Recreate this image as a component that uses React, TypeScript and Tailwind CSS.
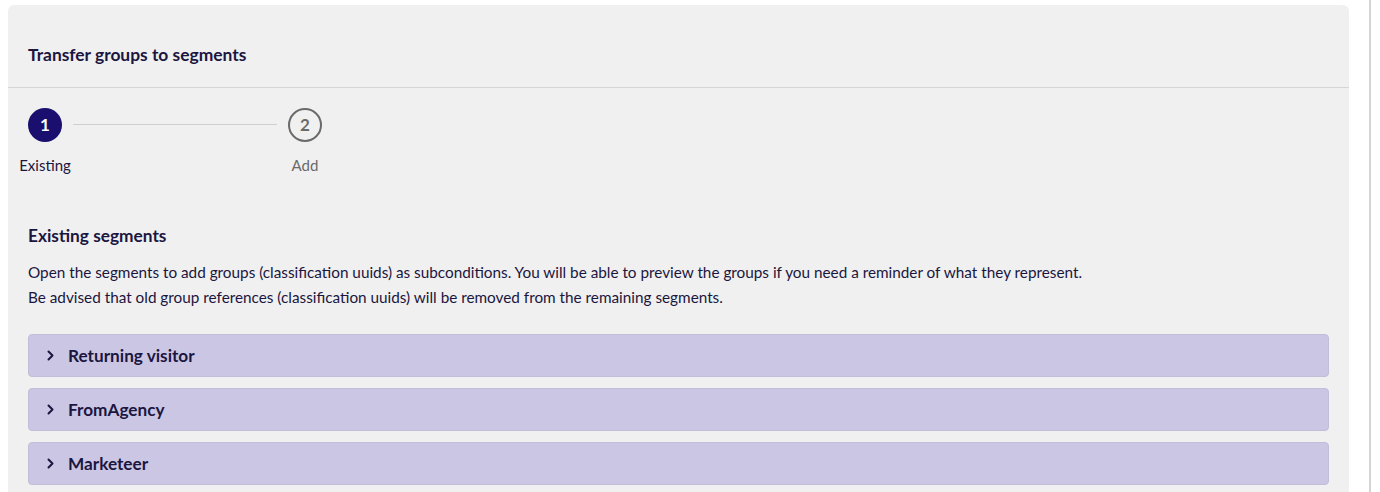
import React from 'react';

const segments = ['Returning visitor', 'FromAgency', 'Marketeer'];

function Chevron() {
  return (
    <svg width="8" height="11" viewBox="0 0 8 11" fill="none" className="shrink-0">
      <path d="M1.5 1.5l4 4-4 4" stroke="#1b1640" strokeWidth="2" strokeLinecap="round" strokeLinejoin="round" />
    </svg>
  );
}

function Step({ num, label, active }: { num: number; label: string; active?: boolean }) {
  return (
    <div className="flex w-[56px] flex-col items-center">
      {active ? (
        <div className="flex h-[34px] w-[34px] items-center justify-center rounded-full bg-[#1a0f6e] text-[17px] font-bold text-white">
          {num}
        </div>
      ) : (
        <div className="flex h-[34px] w-[34px] items-center justify-center rounded-full border-2 border-[#6a6a6a] text-[17px] font-bold text-[#6a6a6a]">
          {num}
        </div>
      )}
      <div className={`mt-[13px] whitespace-nowrap text-[15px] leading-[20px] ${active ? 'text-[#1b1640]' : 'text-[#6a6a6a]'}`}>
        {label}
      </div>
    </div>
  );
}

export default function App() {
  return (
    <div className="flex h-[492px] w-[1380px] overflow-hidden bg-white font-['Lato',sans-serif] text-[#1b1640]">
      <div className="ml-2 mt-[5px] w-[1341px] rounded-t-[6px] bg-[#f0f0f0]">
        {/* Header */}
        <div className="border-b border-[#d6d6d6] px-5 pb-[20px] pt-[38px]">
          <h2 className="text-[17.4px] font-bold leading-[24px]">Transfer groups to segments</h2>
        </div>

        {/* Stepper */}
        <div className="flex items-start pl-[9px] pt-[20px]">
          <Step num={1} label="Existing" active />
          <div className="mt-[16px] h-px w-[204px] bg-[#cfcfcf]" />
          <Step num={2} label="Add" />
        </div>

        {/* Existing segments */}
        <div className="px-5 pt-[49px]">
          <h3 className="text-[17.3px] font-bold leading-[24px]">Existing segments</h3>
          <p className="mt-[12px] text-[15.3px] leading-[25px]">
            Open the segments to add groups (classification uuids) as subconditions. You will be able to preview the groups if you need a reminder of what they represent.
            <br />
            Be advised that old group references (classification uuids) will be removed from the remaining segments.
          </p>

          <div className="mt-[24px] flex flex-col gap-[11px]">
            {segments.map((s) => (
              <div
                key={s}
                className="flex h-[43px] items-center gap-[13px] rounded-[4px] border border-[#c3bdda] bg-[#cbc6e4] pl-[18px]"
              >
                <Chevron />
                <span className="text-[17.2px] font-bold">{s}</span>
              </div>
            ))}
          </div>
        </div>
      </div>
      <div className="ml-[20px] h-full w-[11px] border-l-2 border-[#d4d4d4]" />
    </div>
  );
}
